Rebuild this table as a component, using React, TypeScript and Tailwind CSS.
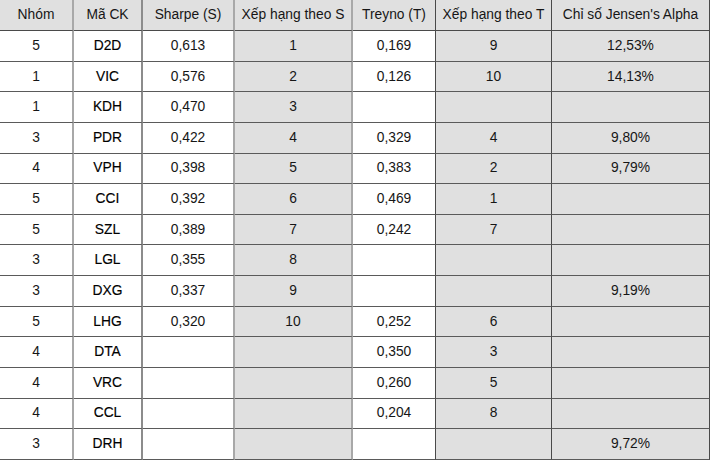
import React from 'react'

type Row = [string, string, string, string, string, string, string]

const rows: Row[] = [
  ['5', 'D2D', '0,613', '1', '0,169', '9', '12,53%'],
  ['1', 'VIC', '0,576', '2', '0,126', '10', '14,13%'],
  ['1', 'KDH', '0,470', '3', '', '', ''],
  ['3', 'PDR', '0,422', '4', '0,329', '4', '9,80%'],
  ['4', 'VPH', '0,398', '5', '0,383', '2', '9,79%'],
  ['5', 'CCI', '0,392', '6', '0,469', '1', ''],
  ['5', 'SZL', '0,389', '7', '0,242', '7', ''],
  ['3', 'LGL', '0,355', '8', '', '', ''],
  ['3', 'DXG', '0,337', '9', '', '', '9,19%'],
  ['5', 'LHG', '0,320', '10', '0,252', '6', ''],
  ['4', 'DTA', '', '', '0,350', '3', ''],
  ['4', 'VRC', '', '', '0,260', '5', ''],
  ['4', 'CCL', '', '', '0,204', '8', ''],
  ['3', 'DRH', '', '', '', '', '9,72%'],
]

const headers = ['Nhóm', 'Mã CK', 'Sharpe (S)', 'Xếp hạng theo S', 'Treyno (T)', 'Xếp hạng theo T', "Chỉ số Jensen's Alpha"]

// right border per column (scan-like mix of light and dark rules)
const colBorder = [
  'border-r-2 border-r-[#a8a8a8]',
  'border-r-2 border-r-[#8c8c8c]',
  'border-r-2 border-r-[#a8a8a8]',
  'border-r-2 border-r-[#a8a8a8]',
  'border-r border-r-[#4a4a4a]',
  'border-r border-r-[#4a4a4a]',
  'border-r border-r-[#4a4a4a]',
]

const shaded = [false, false, false, true, false, true, true]

export default function App() {
  return (
    <div className="w-[710px] h-[461px] bg-white font-['Liberation_Sans',Arial,sans-serif] text-[13.8px] text-[#161616]">
      <div className="grid grid-cols-[74px_69px_92px_118px_83px_116px_158px]">
        {headers.map((h, i) => (
          <div
            key={h}
            className={`h-[31px] flex items-center justify-center bg-[#e0e0e0] border-b border-b-[#4a4a4a] whitespace-nowrap ${colBorder[i]}`}
          >
            {h}
          </div>
        ))}
        {rows.map((r, ri) =>
          r.map((v, ci) => (
            <div
              key={`${ri}-${ci}`}
              className={`h-[30.64px] pt-px flex items-center justify-center border-b border-b-[#5a5a5a] ${colBorder[ci]} ${
                shaded[ci] ? 'bg-[#e0e0e0]' : 'bg-white'
              } ${ci === 1 ? 'text-black [-webkit-text-stroke:0.15px_black]' : ''}`}
            >
              {v}
            </div>
          ))
        )}
      </div>
    </div>
  )
}
